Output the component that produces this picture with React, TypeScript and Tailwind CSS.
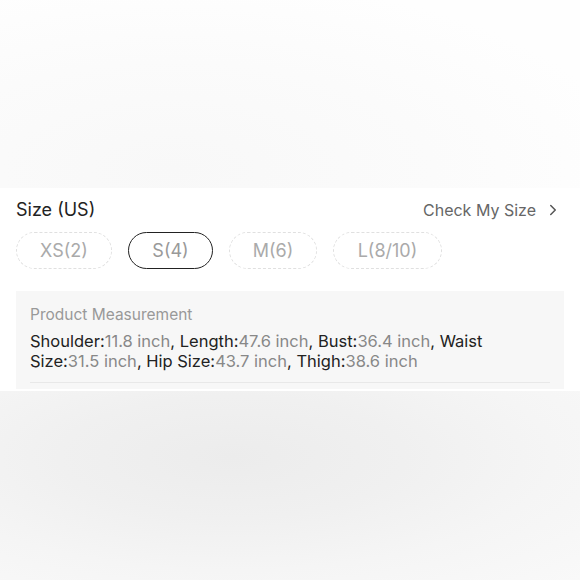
import { Fragment } from "react";
import { ChevronRight } from "lucide-react";

const sizes = [
  { label: "XS(2)", width: "w-[96px]", active: false },
  { label: "S(4)", width: "w-[85px]", active: true },
  { label: "M(6)", width: "w-[88px]", active: false },
  { label: "L(8/10)", width: "w-[109px]", active: false },
];

const measurements = [
  { name: "Shoulder", value: "11.8 inch" },
  { name: "Length", value: "47.6 inch" },
  { name: "Bust", value: "36.4 inch" },
  { name: "Waist Size", value: "31.5 inch" },
  { name: "Hip Size", value: "43.7 inch" },
  { name: "Thigh", value: "38.6 inch" },
];

export default function App() {
  return (
    <div className="w-[580px] h-[580px] overflow-hidden bg-white font-['Inter','Liberation_Sans',sans-serif]">
      {/* blurred top */}
      <div className="h-[188px] bg-[radial-gradient(ellipse_at_30%_90%,#f8f8f8_0%,#fbfbfb_45%,#fefefe_80%)]" />

      {/* size panel */}
      <div className="h-[203px] overflow-hidden bg-white px-4 pt-[11px]">
        <div className="flex items-center justify-between">
          <span className="text-[18px] leading-[22px] text-[#222]">Size (US)</span>
          <button className="flex items-center gap-[8px] text-[16px] leading-[20px] text-[#666] mr-[2px]">
            Check My Size
            <ChevronRight className="h-[18px] w-[18px] text-[#555]" strokeWidth={2} />
          </button>
        </div>

        <div className="mt-[11px] flex gap-4">
          {sizes.map((s) => (
            <div
              key={s.label}
              className={`${s.width} h-[37px] flex items-center justify-center rounded-full text-[18px] ${
                s.active
                  ? "border-[1.5px] border-[#222] text-[#999]"
                  : "border border-dashed border-[#e0e0e0] text-[#aaa]"
              }`}
            >
              {s.label}
            </div>
          ))}
        </div>

        <div className="mt-[22px] bg-[#f7f7f7] px-[14px] pt-[14px] pb-[6px]">
          <div className="text-[15.5px] leading-[20px] text-[#999]">Product Measurement</div>
          <p className="mt-[6px] text-[16.5px] leading-[20px] text-[#222]">
            {measurements.map((m, i) => (
              <Fragment key={m.name}>
                {m.name}:<span className="text-[#888]">{m.value}</span>
                {i < measurements.length - 1 ? ", " : ""}
              </Fragment>
            ))}
          </p>
          <div className="mt-[11px] border-t border-[#e8e8e8]" />
        </div>
      </div>

      {/* blurred bottom */}
      <div className="h-[189px] bg-[radial-gradient(ellipse_at_40%_35%,#ececec_0%,#f0f0f0_35%,#f5f5f5_65%,#f9f9f9_100%)]" />
    </div>
  );
}
